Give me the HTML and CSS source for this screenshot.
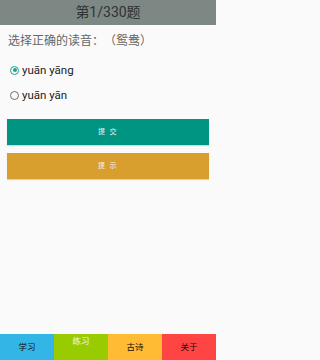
FILE: index.html
```html
<!DOCTYPE html>
<html lang="zh">
<head>
<meta charset="utf-8">
<link rel="stylesheet" href="styles.css">
</head>
<body>
<div class="app">
  <header class="topbar">第1/330题</header>
  <main class="content">
    <p class="question">选择正确的读音：（鸳鸯）</p>
    <div class="options">
      <label class="option"><span class="radio checked"></span><span class="opt-text">yuān yāng</span></label>
      <label class="option"><span class="radio"></span><span class="opt-text">yuān yān</span></label>
    </div>
    <div class="btn btn-submit">提 交</div>
    <div class="btn btn-hint">提 示</div>
  </main>
  <nav class="tabs">
    <div class="tab tab-learn">学习</div>
    <div class="tab tab-practice">练习</div>
    <div class="tab tab-poem">古诗</div>
    <div class="tab tab-about">关于</div>
  </nav>
</div>
</body>
</html>
```

FILE: styles.css
```css
html, body {
  margin: 0;
  padding: 0;
  background: #fafafa;
}
body {
  font-family: Roboto, "Noto Sans CJK SC", sans-serif;
}
.app {
  width: 216px;
  height: 360px;
  display: flex;
  flex-direction: column;
}
.topbar {
  height: 25px;
  background: #7d8885;
  color: #2f3331;
  font-size: 14px;
  line-height: 25px;
  text-align: center;
  flex: none;
}
.content {
  flex: 1;
  padding: 0 7px;
}
.question {
  margin: 7px 0 0 0;
  font-size: 12px;
  line-height: 16px;
  color: #666;
  padding-left: 1px;
  text-spacing-trim: space-all;
  font-family: "Noto Sans CJK SC", sans-serif;
}
.options {
  margin-top: 14px;
  display: flex;
  flex-direction: column;
  gap: 9px;
}
.option {
  display: flex;
  align-items: center;
  height: 16px;
  padding-left: 3px;
}
.radio {
  width: 7px;
  height: 7px;
  border: 1.2px solid #6e6e6e;
  border-radius: 50%;
  box-sizing: content-box;
  margin-right: 3px;
  position: relative;
}
.radio.checked {
  border-color: #21a08e;
}
.radio.checked::after {
  content: "";
  position: absolute;
  left: 1.5px;
  top: 1.5px;
  width: 4px;
  height: 4px;
  border-radius: 50%;
  background: #21a08e;
}
.opt-text {
  font-size: 11.5px;
  color: #1c1c1c;
  font-family: Roboto, sans-serif;
}
.btn {
  height: 26px;
  line-height: 26px;
  text-align: center;
  color: #f3f3f3;
  font-size: 7px;
  letter-spacing: 1.5px;
  box-shadow: 0 1px 1px rgba(0,0,0,0.15);
}
.btn-submit {
  margin-top: 16px;
  background: #009482;
}
.btn-hint {
  margin-top: 8px;
  background: #d99f2e;
}
.tabs {
  flex: none;
  height: 26px;
  display: grid;
  grid-template-columns: repeat(4, 1fr);
}
.tab {
  font-size: 8.5px;
  color: #111;
  text-align: center;
  line-height: 25px;
  font-family: "Noto Sans CJK SC", sans-serif;
}
.tab-learn { background: #33b5e5; }
.tab-practice {
  background: #99cc00;
  color: #f4f4f4;
  line-height: 12px;
}
.tab-poem { background: #ffbb33; }
.tab-about { background: #ff4444; }
```
